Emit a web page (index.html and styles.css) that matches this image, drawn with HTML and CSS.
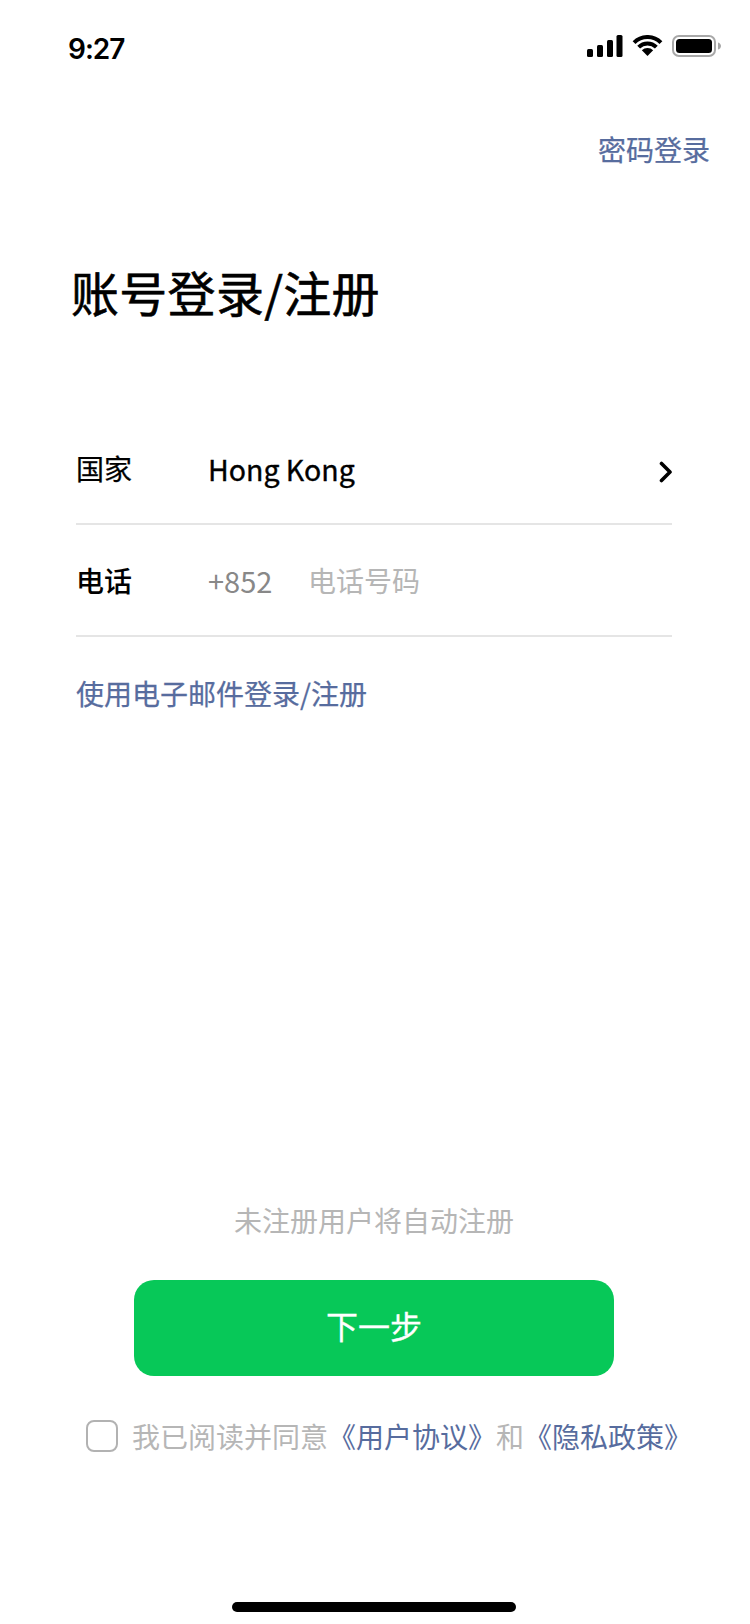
FILE: index.html
```html
<!DOCTYPE html>
<html lang="zh-CN">
<head>
<meta charset="utf-8">
<title>账号登录/注册</title>
<link rel="stylesheet" href="styles.css">
</head>
<body>
<main class="screen">
  <header class="status">
    <span class="time">9:27</span>
    <div class="status-icons">
      <svg class="signal" width="36" height="22" viewBox="0 0 36 22"><rect x="0" y="14" width="6" height="8" rx="1.5"/><rect x="10" y="10" width="6" height="12" rx="1.5"/><rect x="20" y="5" width="6" height="17" rx="1.5"/><rect x="29.500" y="0" width="6" height="22" rx="1.500"/></svg>
      <svg class="wifi" width="31" height="22" viewBox="0 0 31 22"><path d="M2.060 7.560A19 19 0 0 1 28.940 7.560" fill="none" stroke="#000" stroke-width="4"/><path d="M6.660 12.160A12.500 12.500 0 0 1 24.340 12.160" fill="none" stroke="#000" stroke-width="4"/><path d="M15.500 21L9.840 15.340A8 8 0 0 1 21.160 15.340Z"/></svg>
      <svg class="battery" width="50" height="22" viewBox="0 0 50 22"><rect x="1" y="1" width="42" height="20" rx="6" fill="none" stroke="#a8a8a8" stroke-width="2"/><rect x="4" y="4" width="36" height="14" rx="3.500"/><path d="M46 7.500c2 .5 3 2 3 3.500s-1 3-3 3.500z" fill="#a8a8a8"/></svg>
    </div>
  </header>

  <div class="top-action"><a class="link">密码登录</a></div>

  <h1 class="title">账号登录/注册</h1>

  <section class="form">
    <div class="row">
      <span class="label">国家</span>
      <span class="value">Hong Kong</span>
      <svg class="chevron" width="14" height="22" viewBox="0 0 14 22"><path d="M2.500 2.500L11 11L2.500 19.500" fill="none" stroke="#000" stroke-width="3.600" stroke-linecap="round" stroke-linejoin="round"/></svg>
    </div>
    <div class="row row-phone">
      <span class="label label-strong">电话</span>
      <span class="code">+852</span>
      <span class="placeholder">电话号码</span>
    </div>
  </section>

  <a class="link email-link">使用电子邮件登录/注册</a>

  <section class="bottom">
    <p class="hint">未注册用户将自动注册</p>
    <button class="next" type="button">下一步</button>
    <div class="agree">
      <span class="checkbox"></span>
      <p class="agree-text">我已阅读并同意<a class="link">《用户协议》</a>和<a class="link">《隐私政策》</a></p>
    </div>
  </section>

  <div class="home-wrap"><span class="home-bar"></span></div>
</main>
</body>
</html>
```

FILE: styles.css
```css
* {
  box-sizing: border-box;
}

html,
body {
  margin: 0;
  padding: 0;
  background: #fff;
}

body {
  font-family: "Noto Sans CJK SC", "Noto Sans", sans-serif;
  color: #000;
}

.screen {
  width: 750px;
  height: 1624px;
  display: flex;
  flex-direction: column;
  overflow: hidden;
}

.status {
  height: 98px;
  padding: 34px 28px 0 68px;
  display: flex;
  justify-content: space-between;
  align-items: flex-start;
  flex: none;
}

.time {
  font-family: Inter, "Liberation Sans", sans-serif;
  font-size: 28px;
  font-weight: 600;
  line-height: 30px;
  letter-spacing: -1px;
}

.status-icons {
  display: flex;
  align-items: center;
  gap: 9px;
  padding-top: 1px;
}

.link {
  color: #576c9e;
  -webkit-text-stroke: 0.25px currentColor;
}

.top-action {
  display: flex;
  justify-content: flex-end;
  padding-right: 40px;
  font-size: 28px;
  line-height: 40px;
  margin-top: 31px;
}

.title {
  margin: 89px 0 0 71px;
  font-size: 48px;
  font-weight: 400;
  line-height: 66px;
  letter-spacing: 0.3px;
  -webkit-text-stroke: 0.6px #000;
}

.form {
  margin: 93px 78px 0 76px;
}

.row {
  height: 112px;
  display: flex;
  align-items: center;
  border-bottom: 2px solid #e5e5e5;
  font-size: 28px;
  padding-bottom: 4px;
}

.row:first-child {
  height: 108px;
}

.row-phone {
  padding-bottom: 0;
}

.label {
  width: 132px;
  flex: none;
  -webkit-text-stroke: 0.25px #000;
}

.label-strong {
  font-weight: 500;
  -webkit-text-stroke: 0;
}

.value {
  font-size: 28.500px;
  font-weight: 400;
  flex: 1;
  -webkit-text-stroke: 0.35px #000;
}

.chevron {
  flex: none;
  margin: 8px -1px 0 0;
}

.code {
  width: 100px;
  font-size: 29px;
  color: #888;
}

.placeholder {
  color: #b6b6b6;
}

.email-link {
  display: block;
  margin: 36px 0 0 76px;
  font-size: 28px;
  line-height: 40px;
}

.bottom {
  margin-top: auto;
  padding-right: 2px;
  display: flex;
  flex-direction: column;
  align-items: center;
}

.hint {
  margin: 0;
  font-size: 28px;
  line-height: 40px;
  color: #b6b6b6;
}

.next {
  width: 480px;
  height: 96px;
  margin-top: 40px;
  padding: 0 0 6px;
  border: 0;
  border-radius: 20px;
  background: #07c858;
  color: #fff;
  font-family: inherit;
  font-size: 32px;
  font-weight: 400;
  -webkit-text-stroke: 0.3px #fff;
}

.agree {
  align-self: flex-start;
  margin: 40px 0 0 86px;
  display: flex;
  align-items: center;
  gap: 14px;
}

.checkbox {
  width: 32px;
  height: 32px;
  flex: none;
  border: 2px solid #b2b2b2;
  border-radius: 8px;
}

.agree-text {
  margin: 0;
  font-size: 28px;
  line-height: 40px;
  color: #b6b6b6;
  white-space: nowrap;
}

.agree-text .link {
  -webkit-text-stroke: 0;
}

.home-wrap {
  height: 168px;
  flex: none;
  display: flex;
  justify-content: center;
  align-items: flex-end;
  padding: 0 2px 12px 0;
}

.home-bar {
  width: 284px;
  height: 10px;
  border-radius: 5px;
  background: #000;
}
```
